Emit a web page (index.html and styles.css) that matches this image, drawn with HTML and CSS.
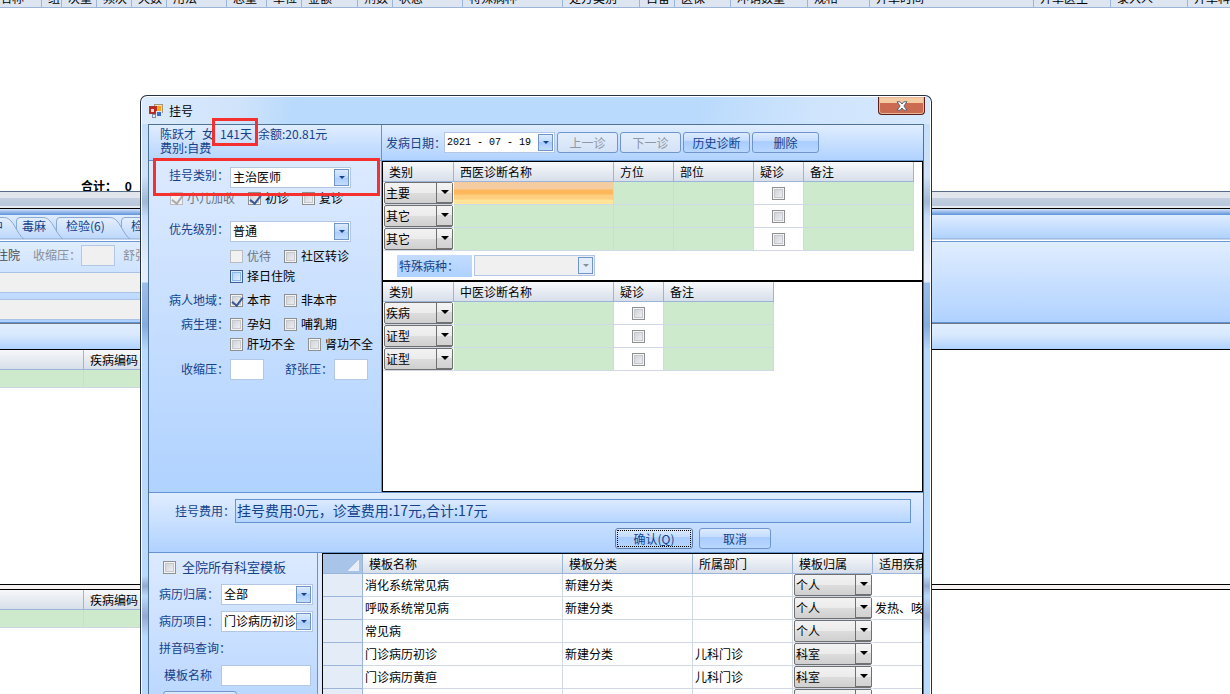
FILE: index.html
```html
<!DOCTYPE html>
<html lang="zh-CN">
<head>
  <meta charset="UTF-8">
  <meta name="viewport" content="width=device-width, initial-scale=1.0">
  <title>挂号</title>
  <link rel="stylesheet" href="styles.css">
</head>
<body>

  <!-- Doctor station behind the dialog -->
  <main class="station">
    <div class="order-header">
      <span class="oh w42">名称</span>
      <span class="oh w20">组</span>
      <span class="oh w35">次量</span>
      <span class="oh w35">频次</span>
      <span class="oh w35">天数</span>
      <span class="oh w60">用法</span>
      <span class="oh w40">总量</span>
      <span class="oh w35">单位</span>
      <span class="oh w56">金额</span>
      <span class="oh w35">剂数</span>
      <span class="oh w70">状态</span>
      <span class="oh w100">特殊病种</span>
      <span class="oh w77">处方类别</span>
      <span class="oh w35">自备</span>
      <span class="oh w56">医保</span>
      <span class="oh w77">冲销数量</span>
      <span class="oh w62">规格</span>
      <span class="oh w164">开单时间</span>
      <span class="oh w77">开单医生</span>
      <span class="oh w77">录入人</span>
      <span class="oh w77">开单科室</span>
    </div>
    <div class="order-body">
      <p class="total">合计： <span>0</span></p>
    </div>
    <div class="splitter"></div>
    <div class="band"></div>
    <nav class="tabs">
      <svg class="tab-shapes" width="200" height="24" viewBox="0 0 200 24">
        <defs>
          <linearGradient id="tab-fill" x1="0" y1="0" x2="0" y2="1">
            <stop offset="0" stop-color="#e4effd"/>
            <stop offset="1" stop-color="#bcd7fb"/>
          </linearGradient>
        </defs>
        <g fill="url(#tab-fill)" stroke="#8aa9d4">
          <path d="M121.500 24V6q0-3.500 3.500-3.500h60V24z"/>
          <path d="M56.500 24V6q0-3.500 3.500-3.500h49c5 0 7 2 10 6l6 10q3 4.500 5 5.500z"/>
          <path d="M16.500 24V6q0-3.500 3.500-3.500h22c5 0 7 2 10 6l6 10q3 4.500 5 5.500z"/>
          <path d="M-5 2.500H3c5 0 7 2 10 6l6 10q3 4.500 5 5.500H-5z"/>
        </g>
      </svg>
      <button class="tab tab-first">中</button>
      <button class="tab tab-dm">毒麻</button>
      <button class="tab tab-jy">检验(6)</button>
      <button class="tab tab-jc">检查</button>
    </nav>
    <div class="tab-page">
      <div class="vitals">
        <span class="vitals-type">住院</span>
        <label for="bg-sbp">收缩压：</label>
        <input id="bg-sbp" type="text" disabled>
        <span class="vitals-dbp">舒张压：</span>
      </div>
      <div class="gray-line"></div>
      <div class="gray-line"></div>
    </div>
    <div class="band-low"></div>
    <table class="back-table">
      <tr><th class="c-wide"></th><th>疾病编码</th></tr>
      <tr><td></td><td></td></tr>
    </table>
    <div class="back-space"></div>
    <div class="double-line"></div>
    <table class="back-table">
      <tr><th class="c-wide"></th><th>疾病编码</th></tr>
      <tr><td></td><td></td></tr>
    </table>
  </main>

  <!-- Registration dialog -->
  <section class="dialog">
    <header class="title-bar">
      <svg class="app-icon" width="14" height="14" viewBox="0 0 14 14">
        <rect x="5.500" y=".5" width="8" height="8" fill="#fbe3a8" stroke="#a8927a"/>
        <rect x="7" y="2" width="5" height="5" fill="#f9a41e"/>
        <rect x=".5" y="2.500" width="7" height="7" fill="#c3271a" stroke="#a03a30"/>
        <rect x="2" y="5" width="3" height="3" fill="#ffd9cf"/>
        <rect x="7.500" y="7.500" width="5" height="5" fill="#3c6bd0" stroke="#dfe7f6"/>
        <rect x="3.500" y="10.500" width="3" height="3" fill="#e9edf4" stroke="#7e8ba3"/>
      </svg>
      <h1>挂号</h1>
      <button class="close" aria-label="关闭">
        <svg width="12" height="10" viewBox="0 0 12 10">
          <path d="M1 .8h3.200L6 3 7.800.8H11L7.900 5 11 9.200H7.800L6 7 4.200 9.200H1L4.100 5z" fill="#fff" stroke="#59636f"/>
        </svg>
      </button>
    </header>

    <div class="client">
      <div class="upper">
        <div class="left-pane">
          <div class="patient">
            <p><span>陈跃才</span><span>女</span><span>141天</span><span>余额:20.81元</span></p>
            <p>费别:自费</p>
          </div>
          <form class="reg-form">
            <div class="row">
              <label class="lbl lbl-up" for="reg-type">挂号类别：</label>
              <div class="combo combo-120">
                <select id="reg-type"><option>主治医师</option></select><i class="arrow"></i>
              </div>
            </div>
            <div class="row checks checks-first">
              <label class="check off"><input type="checkbox" checked disabled>小儿加收</label>
              <label class="check"><input type="checkbox" checked>初诊</label>
              <label class="check"><input type="checkbox">复诊</label>
            </div>
            <div class="row gap-l">
              <label class="lbl lbl-up" for="priority">优先级别：</label>
              <div class="combo combo-120">
                <select id="priority"><option>普通</option></select><i class="arrow"></i>
              </div>
            </div>
            <div class="row checks gap-s">
              <span class="lbl"></span>
              <label class="check off"><input type="checkbox" disabled>优待</label>
              <label class="check"><input type="checkbox">社区转诊</label>
            </div>
            <div class="row checks">
              <span class="lbl"></span>
              <label class="check hot"><input type="checkbox">择日住院</label>
            </div>
            <div class="row checks gap-s">
              <span class="lbl">病人地域：</span>
              <label class="check"><input type="checkbox" checked>本市</label>
              <label class="check"><input type="checkbox">非本市</label>
            </div>
            <div class="row checks gap-s">
              <span class="lbl">病生理：</span>
              <label class="check"><input type="checkbox">孕妇</label>
              <label class="check"><input type="checkbox">哺乳期</label>
            </div>
            <div class="row checks">
              <span class="lbl"></span>
              <label class="check"><input type="checkbox">肝功不全</label>
              <label class="check"><input type="checkbox">肾功不全</label>
            </div>
            <div class="row gap-s">
              <label class="lbl" for="sbp">收缩压：</label>
              <input id="sbp" class="text small" type="text">
              <label class="lbl lbl-dbp" for="dbp">舒张压：</label>
              <input id="dbp" class="text small" type="text">
            </div>
          </form>
        </div>

        <div class="right-pane">
          <div class="toolbar">
            <label for="onset">发病日期：</label>
            <div class="combo date">
              <input id="onset" type="text" value="2021 - 07 - 19"><i class="arrow"></i>
            </div>
            <button class="btn btn-s" disabled>上一诊</button>
            <button class="btn btn-s" disabled>下一诊</button>
            <button class="btn btn-m">历史诊断</button>
            <button class="btn btn-m">删除</button>
          </div>

          <div class="diagnosis">
            <table class="grid west">
              <colgroup><col class="k-type"><col class="k-name"><col class="k-pos"><col class="k-part"><col class="k-doubt"><col class="k-note"></colgroup>
              <tr><th>类别</th><th>西医诊断名称</th><th>方位</th><th>部位</th><th>疑诊</th><th>备注</th></tr>
              <tr>
                <td class="pick"><div class="cell-combo"><select aria-label="类别"><option>主要</option></select><i></i></div></td>
                <td class="current"></td><td></td><td></td>
                <td class="tick"><input type="checkbox" aria-label="疑诊"></td><td></td>
              </tr>
              <tr>
                <td class="pick"><div class="cell-combo"><select aria-label="类别"><option>其它</option></select><i></i></div></td>
                <td></td><td></td><td></td>
                <td class="tick"><input type="checkbox" aria-label="疑诊"></td><td></td>
              </tr>
              <tr>
                <td class="pick"><div class="cell-combo"><select aria-label="类别"><option>其它</option></select><i></i></div></td>
                <td></td><td></td><td></td>
                <td class="tick"><input type="checkbox" aria-label="疑诊"></td><td></td>
              </tr>
            </table>
            <div class="special">
              <label for="special">特殊病种：</label>
              <div class="combo combo-120 disabled">
                <select id="special" disabled><option></option></select><i class="arrow"></i>
              </div>
            </div>
            <table class="grid tcm">
              <colgroup><col class="k-type"><col class="k-name"><col class="k-doubt"><col class="k-note"></colgroup>
              <tr><th>类别</th><th>中医诊断名称</th><th>疑诊</th><th>备注</th></tr>
              <tr>
                <td class="pick"><div class="cell-combo"><select aria-label="类别"><option>疾病</option></select><i></i></div></td>
                <td></td><td class="tick"><input type="checkbox" aria-label="疑诊"></td><td></td>
              </tr>
              <tr>
                <td class="pick"><div class="cell-combo"><select aria-label="类别"><option>证型</option></select><i></i></div></td>
                <td></td><td class="tick"><input type="checkbox" aria-label="疑诊"></td><td></td>
              </tr>
              <tr>
                <td class="pick"><div class="cell-combo"><select aria-label="类别"><option>证型</option></select><i></i></div></td>
                <td></td><td class="tick"><input type="checkbox" aria-label="疑诊"></td><td></td>
              </tr>
            </table>
          </div>
        </div>
      </div>

      <!-- Fee and confirm -->
      <div class="fee">
        <div class="fee-line">
          <label for="fee">挂号费用：</label>
          <input id="fee" type="text" readonly value="挂号费用:0元，诊查费用:17元,合计:17元">
        </div>
        <div class="actions">
          <button class="btn btn-ok">确认(<u>Q</u>)</button>
          <button class="btn btn-cancel">取消</button>
        </div>
      </div>

      <!-- Templates -->
      <div class="lower">
        <form class="filter">
          <label class="check all"><input type="checkbox">全院所有科室模板</label>
          <div class="filter-row">
            <label for="owner">病历归属：</label>
            <div class="combo combo-92"><select id="owner"><option>全部</option></select><i class="arrow"></i></div>
          </div>
          <div class="filter-row">
            <label for="item">病历项目：</label>
            <div class="combo combo-92"><select id="item"><option>门诊病历初诊</option></select><i class="arrow"></i></div>
          </div>
          <div class="filter-row">拼音码查询：</div>
          <div class="filter-row indent">
            <label for="tpl-name">模板名称</label>
            <input id="tpl-name" class="text wide" type="text">
          </div>
          <button class="btn btn-query" type="button">查询</button>
        </form>
        <div class="templates">
          <table class="grid tpl">
            <colgroup><col class="t-head"><col class="t-name"><col class="t-kind"><col class="t-dept"><col class="t-owner"><col class="t-ill"></colgroup>
            <tr><th class="corner"></th><th>模板名称</th><th>模板分类</th><th>所属部门</th><th>模板归属</th><th>适用疾病</th></tr>
            <tr><td></td><td>消化系统常见病</td><td>新建分类</td><td></td><td class="pick"><div class="cell-combo"><select aria-label="模板归属"><option>个人</option></select><i></i></div></td><td></td></tr>
            <tr><td></td><td>呼吸系统常见病</td><td>新建分类</td><td></td><td class="pick"><div class="cell-combo"><select aria-label="模板归属"><option>个人</option></select><i></i></div></td><td>发热、咳嗽</td></tr>
            <tr><td></td><td>常见病</td><td></td><td></td><td class="pick"><div class="cell-combo"><select aria-label="模板归属"><option>个人</option></select><i></i></div></td><td></td></tr>
            <tr><td></td><td>门诊病历初诊</td><td>新建分类</td><td>儿科门诊</td><td class="pick"><div class="cell-combo"><select aria-label="模板归属"><option>科室</option></select><i></i></div></td><td></td></tr>
            <tr><td></td><td>门诊病历黄疸</td><td></td><td>儿科门诊</td><td class="pick"><div class="cell-combo"><select aria-label="模板归属"><option>科室</option></select><i></i></div></td><td></td></tr>
            <tr><td></td><td></td><td></td><td></td><td class="pick"><div class="cell-combo"><select aria-label="模板归属"><option></option></select><i></i></div></td><td></td></tr>
          </table>
        </div>
      </div>
    </div>

    <div class="mark mark-age"></div>
    <div class="mark mark-type"></div>
  </section>

</body>
</html>
```

FILE: styles.css
```css
* {
  box-sizing: border-box;
}

body {
  margin: 0;
  height: 100vh;
  overflow: hidden;
  position: relative;
  background: #fff;
  color: #000;
  font-family: "Noto Sans CJK SC", "Liberation Sans", sans-serif;
  font-size: 12px;
  line-height: 14px;
}

input, select, button {
  font: inherit;
  color: inherit;
  margin: 0;
  padding: 0;
  border-radius: 0;
}

p, h1 {
  margin: 0;
}

/* ---------- station behind the dialog ---------- */
.order-header {
  display: flex;
  align-items: flex-end;
  height: 8px;
  overflow: hidden;
  background: #dde5f0;
  border-bottom: 1px solid #9ab5d8;
}

.oh {
  flex: none;
  padding-left: 6px;
  border-right: 1px solid #9ab5d8;
  white-space: nowrap;
  overflow: hidden;
  line-height: 18px;
}

.oh:first-child { padding-left: 0; }
.w20 { width: 20px; }
.w35 { width: 35px; }
.w40 { width: 40px; }
.w42 { width: 42px; }
.w56 { width: 56px; }
.w60 { width: 60px; }
.w62 { width: 62px; }
.w70 { width: 70px; }
.w77 { width: 77px; }
.w100 { width: 100px; }
.w164 { width: 164px; }

.order-body {
  display: flex;
  align-items: flex-end;
  height: 183px;
  padding-left: 81px;
  overflow: hidden;
}

.total {
  font-weight: bold;
  line-height: 10px;
}

.total span {
  margin-left: 5px;
}

.splitter {
  height: 18px;
  border-top: 1px solid #5a6c8c;
  border-bottom: 1px solid #000;
  background: linear-gradient(#e1e6ed 6px, #c3cfe0 6px, #b9c8dc 12px, #b9c8dc 14px, #e6ebf2 14px);
}

.band {
  height: 6px;
  background: linear-gradient(#d5e3f8, #5b92dc);
}

.tabs {
  position: relative;
  display: flex;
  height: 27px;
  padding-top: 1px;
  background: linear-gradient(#e0edff, #b0d2ff 23px, #8aa9d4 24px, #fff 25px, #fff 26px, #6a98d6 26px);
}

.tab-shapes {
  position: absolute;
  left: 0;
  top: 0;
}

.tab {
  position: relative;
  flex: none;
  height: 20px;
  border: 0;
  background: none;
  color: #15428b;
  text-align: left;
}

.tab-first { width: 22px; text-indent: -9px; }
.tab-dm { width: 44px; }
.tab-jy { width: 65px; }
.tab-jc { width: 60px; }

.tab-page {
  height: 80px;
  background: linear-gradient(#e0edff, #b0d2ff);
}

.vitals {
  display: flex;
  align-items: center;
  height: 30px;
  color: #8a8f96;
  padding-bottom: 4px;
}

.vitals-type {
  width: 33px;
  text-indent: -4px;
  color: #444b55;
}

.vitals input {
  width: 34px;
  height: 21px;
  border: 1px solid #b3c7e4;
  background: #f0f0f0;
}

.vitals-dbp {
  margin-left: 8px;
}

.gray-line {
  width: 300px;
  height: 21px;
  margin-bottom: 6px;
  border: 1px solid #a9c3e6;
  border-left: 0;
  background: #f0f0f0;
}

.band-low {
  height: 28px;
  border-top: 1px solid #5f93d8;
  border-bottom: 1px solid #000;
  background: linear-gradient(#6d7682 1px, #e0eeff 1px, #d8e9fd 12px, #b0d2ff);
}

.back-table {
  width: 300px;
  border-spacing: 0;
  table-layout: fixed;
}

.back-table th {
  height: 20px;
  padding: 0 0 0 6px;
  border-right: 1px solid #9ab5d8;
  border-bottom: 1px solid #9ab5d8;
  background: linear-gradient(#f6f8fa, #d8dfea);
  font-weight: normal;
  text-align: left;
}

.back-table .c-wide { width: 84px; }

.back-table td {
  height: 18px;
  padding: 0;
  border-right: 1px solid #cbd8e3;
  border-bottom: 1px solid #cbd8e3;
  background: #cdeacd;
}

.back-space {
  height: 196px;
}

.double-line {
  height: 6px;
  border-top: 1px solid #000;
  border-bottom: 1px solid #000;
  background: #f7f2f2;
}

/* ---------- dialog frame ---------- */
.dialog {
  position: absolute;
  top: 95px;
  left: 140px;
  right: 298px;
  bottom: 0;
  padding: 0 7px;
  overflow: hidden;
  border: 1px solid #26323f;
  border-bottom: 0;
  border-radius: 7px 7px 0 0;
  background: linear-gradient(#c5dffb 30px, #cfe2f8 80px, #9fb8d4 106px, #c6dcf7 120px, #e4edf9 170px, #e4edf9 186px, #9bbde9 187px, #86acdf 230px, #b9dafc 255px, #b9dafc 480px, #94a9cf 490px, #b9dafc 500px, #94a9cf 520px, #b9dafc 540px);
  box-shadow: inset 1px 1px #fff, inset -1px 0 #fff;
}

.title-bar {
  display: flex;
  align-items: center;
  height: 27px;
  margin: 1px -6px 0;
  padding-left: 7px;
  border-radius: 6px 6px 0 0;
  background: linear-gradient(100deg, #dcebfc, #cfe3fb 100px, #b9dafc 150px, #b9dafc 70%, #cfe4fd 85%, #d6e8fd);
}

.title-bar h1 {
  flex: 1;
  margin-left: 6px;
  font-size: 12px;
  font-weight: normal;
}

.close {
  display: flex;
  align-self: flex-start;
  align-items: center;
  justify-content: center;
  width: 47px;
  height: 18px;
  margin-right: 5px;
  border: 1px solid #5a1f1c;
  border-top: 0;
  border-radius: 0 0 4px 4px;
  background: linear-gradient(#f5cba3 6px, #cd6b51 6px, #c96a52);
  box-shadow: inset 0 0 0 1px #e9b596;
}

.client {
  border: 1px solid #4f7396;
  border-bottom: 0;
}

/* ---------- left pane ---------- */
.upper {
  display: flex;
  border-bottom: 1px solid #6593cf;
}

.left-pane {
  display: flex;
  flex-direction: column;
  flex: none;
  width: 233px;
  border-right: 1px solid #6593cf;
}

.patient {
  height: 36px;
  padding: 2px 0 0 11px;
  border-bottom: 1px solid #6593cf;
  background: linear-gradient(#e0edff, #b5d5ff);
  color: #15428b;
}

.patient p {
  display: flex;
  gap: 6px;
}

.reg-form {
  flex: 1;
  min-height: 331px;
  padding-top: 5px;
  background: linear-gradient(#dceaff, #b0d2ff);
}

.row {
  display: flex;
  align-items: center;
  height: 22px;
}

.checks {
  height: 20px;
  gap: 13px;
}

.checks-first { padding-left: 21px; }
.checks .lbl { margin-right: -13px; }
.gap-s { margin-top: 4px; }
.gap-l { margin-top: 12px; }

.lbl {
  flex: none;
  width: 81px;
  padding-right: 1px;
  color: #15428b;
  text-align: right;
}

.lbl-up { padding-bottom: 5px; }
.lbl-dbp { width: 70px; }

.check {
  display: flex;
  align-items: center;
  gap: 4px;
  white-space: nowrap;
}

.off { color: #6d747e; }

input[type="checkbox"] {
  appearance: none;
  flex: none;
  position: relative;
  width: 13px;
  height: 13px;
  border: 1px solid #8e8f8f;
  background: linear-gradient(135deg, #c9ccd2, #f4f5f6);
  box-shadow: inset 0 0 0 1px #f4f4f4, inset 0 0 0 2px #c4c8ce;
}

input[type="checkbox"]:checked::after {
  content: "";
  position: absolute;
  left: 3px;
  top: 0;
  width: 5px;
  height: 9px;
  border: solid #3b5a94;
  border-width: 0 2px 2px 0;
  transform: rotate(38deg);
}

input[type="checkbox"]:disabled {
  border-color: #b9bcc0;
  background: #f1f1f1;
  box-shadow: none;
}

input[type="checkbox"]:disabled::after {
  border-color: #a9abb0;
}

.hot input[type="checkbox"] {
  border-color: #3c5f99;
  background: linear-gradient(135deg, #a5cdf5, #eaf5ff);
  box-shadow: inset 0 0 0 1px #dcebfb, inset 0 0 0 2px #8db8ea;
}

/* ---------- controls ---------- */
.combo {
  display: grid;
  align-items: center;
  flex: none;
  height: 21px;
  border: 1px solid #b3c7e4;
  background: #fff;
}

.combo select,
.combo input {
  grid-area: 1 / 1;
  appearance: none;
  width: 100%;
  min-width: 0;
  height: 19px;
  padding: 0 0 0 2px;
  border: 0;
  background: transparent;
  color: #000;
}

.combo-120 { width: 121px; }
.combo-92 { width: 92px; }

.arrow {
  grid-area: 1 / 1;
  justify-self: end;
  display: flex;
  align-items: center;
  justify-content: center;
  width: 15px;
  height: 17px;
  margin-right: 1px;
  border: 1px solid #6f95cc;
  background: linear-gradient(#dcebff, #bcd8ff 50%, #a9cbfb 50%, #c3ddff);
  pointer-events: none;
}

.arrow::after {
  content: "";
  border: 3px solid transparent;
  border-top-color: #15428b;
  border-bottom: 0;
}

.disabled { background: #f0f0f0; }
.disabled .arrow { background: #e3edf9; }
.disabled .arrow::after { border-top-color: #8a8f96; }

.text {
  height: 21px;
  border: 1px solid #b3c7e4;
  background: #fff;
}

.small { width: 34px; }
.wide { width: 90px; }

.btn {
  flex: none;
  height: 21px;
  border: 1px solid #6f95cc;
  border-radius: 3px;
  background: linear-gradient(#dcebff, #c6ddff 40%, #a9cdff 45%, #b9d7ff);
  color: #15428b;
  line-height: 17px;
}

.btn:disabled {
  background: linear-gradient(#e3eefc, #d3e2f6);
  color: #8f97a3;
}

.btn-s { width: 61px; }
.btn-m { width: 67px; }

/* ---------- right pane ---------- */
.right-pane {
  display: flex;
  flex-direction: column;
  flex: 1;
  min-width: 0;
}

.toolbar {
  display: flex;
  align-items: center;
  gap: 2px;
  height: 36px;
  padding-left: 4px;
  border-bottom: 1px solid #6593cf;
  background: linear-gradient(#e0edff, #b0d2ff);
  color: #15428b;
}

.toolbar label {
  width: 56px;
  white-space: nowrap;
}

.date {
  width: 111px;
}

.date input {
  font-family: "Liberation Mono", monospace;
  font-size: 10px;
}

.diagnosis {
  flex: 1;
  border: 1px solid #000;
  background: #fff;
}

.grid {
  border-spacing: 0;
  table-layout: fixed;
}

.grid th {
  height: 20px;
  padding: 0 0 0 6px;
  border-right: 1px solid #9ab5d8;
  border-bottom: 1px solid #9ab5d8;
  background: linear-gradient(#f7f9fb, #d8dfea);
  font-weight: normal;
  text-align: left;
  white-space: nowrap;
}

.grid td {
  height: 23px;
  padding: 0;
  border-right: 1px solid #d0d7e5;
  border-bottom: 1px solid #d0d7e5;
  background: #cdeacd;
}

.west { width: 531px; }
.tcm { width: 391px; }
.k-type { width: 71px; }
.k-name { width: 160px; }
.k-pos { width: 60px; }
.k-part { width: 80px; }
.k-doubt { width: 50px; }
.k-note { width: 110px; }

.grid .pick {
  padding: 0 0 0 1px;
  border-right-color: #fff;
  background: #fff;
}

.grid .tick {
  background: #fff;
  text-align: center;
}

.tick input {
  display: block;
  margin: 0 auto;
}

.grid .current {
  background: linear-gradient(#f5cba0 7px, #ffb75b 8px, #ffb75b 12px, #ffcf7f 13px, #ffcf7f 17px, #ffe49a 18px);
}

.cell-combo {
  display: grid;
  align-items: center;
  height: 22px;
  border: 1px solid #707070;
  border-radius: 2px;
  background: linear-gradient(#f2f2f2, #ebebeb 50%, #dddddd 50%, #cfcfcf);
}

.cell-combo select {
  grid-area: 1 / 1;
  appearance: none;
  width: 100%;
  height: 20px;
  border: 0;
  padding-left: 1px;
  background: transparent;
}

.cell-combo i {
  grid-area: 1 / 1;
  justify-self: end;
  display: flex;
  justify-content: center;
  width: 16px;
  height: 20px;
  padding-top: 7px;
  border: 1px solid #707070;
  border-width: 0 0 1px 1px;
  background: linear-gradient(#f5f5f5, #ececec 50%, #dadada 50%, #d2d2d2);
  pointer-events: none;
}

.cell-combo i::after {
  content: "";
  height: 4px;
  border: 4px solid transparent;
  border-top-color: #000;
  border-bottom: 0;
}

.special {
  display: flex;
  align-items: flex-start;
  gap: 2px;
  height: 31px;
  padding: 4px 0 0 14px;
  border-bottom: 2px solid #000;
}

.special label {
  width: 75px;
  height: 22px;
  padding-left: 2px;
  background: linear-gradient(#c3dcff, #aed1ff);
  color: #15428b;
  line-height: 21px;
}

/* ---------- fee ---------- */
.fee {
  padding: 6px 12px 3px 26px;
  border-bottom: 1px solid #6593cf;
  background: linear-gradient(#e0edff, #b0d2ff);
  color: #15428b;
}

.fee-line {
  display: flex;
  align-items: center;
}

.fee-line label {
  width: 60px;
}

.fee-line input {
  flex: 1;
  height: 24px;
  padding: 0 0 3px 1px;
  border: 1px solid #6593cf;
  background: linear-gradient(#dceaff, #b5d5ff);
  font-size: 14px;
}

.actions {
  display: flex;
  justify-content: flex-end;
  gap: 6px;
  padding: 5px 140px 0 0;
}

.btn-ok {
  width: 78px;
  border-color: #5f7fb0;
  outline: 1px dotted #000;
  outline-offset: -3px;
}

.btn-cancel { width: 72px; }

/* ---------- templates ---------- */
.lower {
  display: flex;
  background: #dceaff;
}

.filter {
  display: flex;
  flex-direction: column;
  flex: none;
  gap: 5px;
  width: 169px;
  padding: 3px 0 0 10px;
  border-right: 1px solid #6593cf;
  background: linear-gradient(#dceaff, #b8d6ff);
  color: #15428b;
}

.all {
  height: 22px;
  padding-left: 4px;
  gap: 6px;
  font-size: 13px;
}

.filter-row {
  display: flex;
  align-items: center;
  height: 22px;
}

.filter-row label {
  width: 62px;
}

.indent {
  padding-left: 5px;
}

.indent label {
  width: 57px;
}

.btn-query {
  width: 74px;
  margin-left: 4px;
}

.templates {
  flex: 1;
  min-width: 0;
  margin-left: 4px;
  overflow: hidden;
  border-left: 1px solid #000;
  border-top: 1px solid #000;
  border-right: 1px solid #000;
  background: #fff;
}

.tpl { width: 670px; }
.t-head { width: 40px; }
.t-name { width: 200px; }
.t-kind { width: 130px; }
.t-dept { width: 100px; }
.t-owner { width: 80px; }
.t-ill { width: 120px; }

.grid .corner {
  background: linear-gradient(135deg, transparent 50%, #e9eef6 50%) right 3px bottom 2px / 12px 12px no-repeat, #a9c4e9;
}

.tpl td {
  padding-left: 2px;
  background: #fff;
}

.tpl td:first-child {
  border-color: #9ab5d8;
  background: #e4ecf7;
}

/* ---------- red marks ---------- */
.mark {
  position: absolute;
  border: 3px solid #f5312f;
  pointer-events: none;
}

.mark-age {
  left: 71px;
  top: 22px;
  width: 46px;
  height: 28px;
}

.mark-type {
  left: 12px;
  top: 62px;
  width: 227px;
  height: 38px;
}
```
